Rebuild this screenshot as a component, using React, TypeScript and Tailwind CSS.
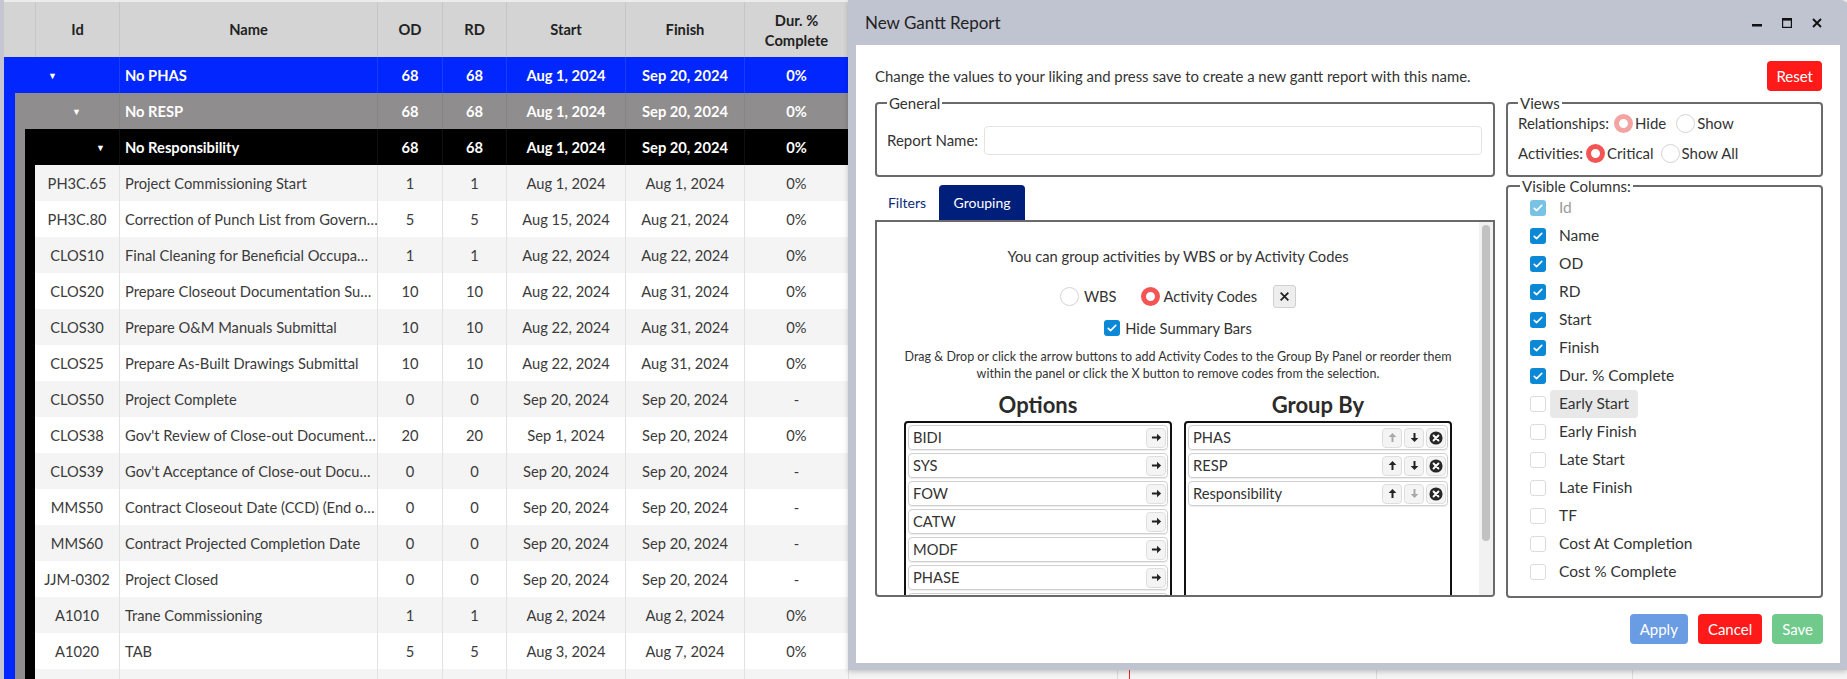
import React from 'react';
import clsx from 'clsx';

type Row = { id: string; name: string; od: string; rd: string; start: string; finish: string; dur: string };

const ROWS: Row[] = [
  { id: 'PH3C.65', name: 'Project Commissioning Start', od: '1', rd: '1', start: 'Aug 1, 2024', finish: 'Aug 1, 2024', dur: '0%' },
  { id: 'PH3C.80', name: 'Correction of Punch List from Govern…', od: '5', rd: '5', start: 'Aug 15, 2024', finish: 'Aug 21, 2024', dur: '0%' },
  { id: 'CLOS10', name: 'Final Cleaning for Beneficial Occupa…', od: '1', rd: '1', start: 'Aug 22, 2024', finish: 'Aug 22, 2024', dur: '0%' },
  { id: 'CLOS20', name: 'Prepare Closeout Documentation Su…', od: '10', rd: '10', start: 'Aug 22, 2024', finish: 'Aug 31, 2024', dur: '0%' },
  { id: 'CLOS30', name: 'Prepare O&M Manuals Submittal', od: '10', rd: '10', start: 'Aug 22, 2024', finish: 'Aug 31, 2024', dur: '0%' },
  { id: 'CLOS25', name: 'Prepare As-Built Drawings Submittal', od: '10', rd: '10', start: 'Aug 22, 2024', finish: 'Aug 31, 2024', dur: '0%' },
  { id: 'CLOS50', name: 'Project Complete', od: '0', rd: '0', start: 'Sep 20, 2024', finish: 'Sep 20, 2024', dur: '-' },
  { id: 'CLOS38', name: "Gov't Review of Close-out Document…", od: '20', rd: '20', start: 'Sep 1, 2024', finish: 'Sep 20, 2024', dur: '0%' },
  { id: 'CLOS39', name: "Gov't Acceptance of Close-out Docu…", od: '0', rd: '0', start: 'Sep 20, 2024', finish: 'Sep 20, 2024', dur: '-' },
  { id: 'MMS50', name: 'Contract Closeout Date (CCD) (End o…', od: '0', rd: '0', start: 'Sep 20, 2024', finish: 'Sep 20, 2024', dur: '-' },
  { id: 'MMS60', name: 'Contract Projected Completion Date', od: '0', rd: '0', start: 'Sep 20, 2024', finish: 'Sep 20, 2024', dur: '-' },
  { id: 'JJM-0302', name: 'Project Closed', od: '0', rd: '0', start: 'Sep 20, 2024', finish: 'Sep 20, 2024', dur: '-' },
  { id: 'A1010', name: 'Trane Commissioning', od: '1', rd: '1', start: 'Aug 2, 2024', finish: 'Aug 2, 2024', dur: '0%' },
  { id: 'A1020', name: 'TAB', od: '5', rd: '5', start: 'Aug 3, 2024', finish: 'Aug 7, 2024', dur: '0%' },
  { id: '', name: '', od: '', rd: '', start: '', finish: '', dur: '' },
];

// last option sits below the scroll fold, only its top edge shows
const OPTIONS = ['BIDI', 'SYS', 'FOW', 'CATW', 'MODF', 'PHASE', ''];
const GROUP_BY = ['PHAS', 'RESP', 'Responsibility'];
const COLUMNS = [
  { label: 'Id', checked: true, disabled: true },
  { label: 'Name', checked: true },
  { label: 'OD', checked: true },
  { label: 'RD', checked: true },
  { label: 'Start', checked: true },
  { label: 'Finish', checked: true },
  { label: 'Dur. % Complete', checked: true },
  { label: 'Early Start', hover: true },
  { label: 'Early Finish' },
  { label: 'Late Start' },
  { label: 'Late Finish' },
  { label: 'TF' },
  { label: 'Cost At Completion' },
  { label: 'Cost % Complete' },
];

const Caret = () => <span className="text-[9px] leading-none">▼</span>;

const GroupRow = ({ lead, pad, label, divider }: { lead: string; pad: string; label: string; divider: string }) => (
  <div className="flex h-[36px] items-center text-white font-bold text-[14.7px]">
    <div className={clsx('h-full flex items-center', lead, pad)}>
      <Caret />
    </div>
    <div className={clsx('w-[258px] h-full flex items-center pl-[5px] border-l', divider)}>{label}</div>
    <div className={clsx('w-[65px] h-full flex items-center justify-center border-l', divider)}>68</div>
    <div className={clsx('w-[64px] h-full flex items-center justify-center border-l', divider)}>68</div>
    <div className={clsx('w-[119px] h-full flex items-center justify-center border-l', divider)}>Aug 1, 2024</div>
    <div className={clsx('w-[119px] h-full flex items-center justify-center border-l', divider)}>Sep 20, 2024</div>
    <div className={clsx('flex-1 h-full flex items-center justify-center border-l', divider)}>0%</div>
  </div>
);

const DataRow = ({ row, i }: { row: Row; i: number }) => (
  <div className={clsx('flex h-[36px] items-center text-[14.7px] text-[#3b3b3b]', i % 2 === 0 ? 'bg-[#f4f4f4]' : 'bg-white')}>
    <div className="w-[84px] h-full flex items-center justify-center">{row.id}</div>
    <div className="w-[258px] h-full flex items-center pl-[5px] border-l border-[#e2e2e2] whitespace-nowrap overflow-hidden">{row.name}</div>
    <div className="w-[65px] h-full flex items-center justify-center border-l border-[#e2e2e2]">{row.od}</div>
    <div className="w-[64px] h-full flex items-center justify-center border-l border-[#e2e2e2]">{row.rd}</div>
    <div className="w-[119px] h-full flex items-center justify-center border-l border-[#e2e2e2]">{row.start}</div>
    <div className="w-[119px] h-full flex items-center justify-center border-l border-[#e2e2e2]">{row.finish}</div>
    <div className="flex-1 h-full flex items-center justify-center border-l border-[#e2e2e2]">{row.dur}</div>
  </div>
);

const ActivityTable = () => (
  <div className="w-[844px] flex flex-col shrink-0">
    <div className="flex h-[57px] bg-[#d4d4d4] border-t-2 border-[#ececec] text-[14.7px] font-bold text-[#222]">
      <div className="w-[31px]" />
      <div className="w-[84px] flex items-center justify-center border-l border-[#c6c6c6]">Id</div>
      <div className="w-[258px] flex items-center justify-center border-l border-[#c6c6c6]">Name</div>
      <div className="w-[65px] flex items-center justify-center border-l border-[#c6c6c6]">OD</div>
      <div className="w-[64px] flex items-center justify-center border-l border-[#c6c6c6]">RD</div>
      <div className="w-[119px] flex items-center justify-center border-l border-[#c6c6c6]">Start</div>
      <div className="w-[119px] flex items-center justify-center border-l border-[#c6c6c6]">Finish</div>
      <div className="flex-1 flex flex-col items-center justify-center border-l border-[#c6c6c6] leading-[20px]">
        <span>Dur. %</span>
        <span>Complete</span>
      </div>
    </div>
    <div className="flex flex-col bg-[#0226fe]">
      <GroupRow lead="w-[115px]" pad="pl-[44px]" label="No PHAS" divider="border-[#1a3cff]" />
      <div className="pl-[11px]">
        <div className="flex flex-col bg-[#8f8d8e]">
          <GroupRow lead="w-[104px]" pad="pl-[57px]" label="No RESP" divider="border-[#858384]" />
          <div className="pl-[10px]">
            <div className="flex flex-col bg-black">
              <GroupRow lead="w-[94px]" pad="pl-[71px]" label="No Responsibility" divider="border-[#111]" />
              <div className="pl-[10px] flex flex-col">
                {ROWS.map((r, i) => (
                  <DataRow key={i} row={r} i={i} />
                ))}
              </div>
            </div>
          </div>
        </div>
      </div>
    </div>
  </div>
);

const GanttPane = () => (
  <div className="relative flex-1 flex flex-col border-l border-[#ddd]">
    <div className="h-[57px] bg-[#d4d4d4] border-t-2 border-[#ececec]" />
    <div className="h-[108px] bg-white" />
    {ROWS.map((_, i) => (
      <div key={i} className={clsx('h-[36px]', i % 2 === 0 ? 'bg-[#f4f4f4]' : 'bg-white')} />
    ))}
    {/* chart grid */}
    <div className="absolute top-0 bottom-0 left-[268px] w-px bg-[#dcdcdc]" />
    <div className="absolute top-0 bottom-0 left-[527px] w-px bg-[#dcdcdc]" />
    <div className="absolute top-0 bottom-0 left-[783px] w-px bg-[#dcdcdc]" />
    <div className="absolute top-0 bottom-0 left-[280px] w-px bg-[#ff2020]" />
  </div>
);

const Arrow = ({ dir, faded }: { dir: 'right' | 'up' | 'down'; faded?: boolean }) => (
  <svg
    viewBox="0 0 12 12"
    className={clsx('w-[11px] h-[11px]', dir === 'up' && '-rotate-90', dir === 'down' && 'rotate-90')}
  >
    <path d="M1 4.9h5.6V1.8L11 6l-4.4 4.2V7.1H1z" fill={faded ? '#a9a9a9' : '#222'} />
  </svg>
);

const CircleX = () => (
  <svg viewBox="0 0 16 16" className="w-[14px] h-[14px]">
    <circle cx="8" cy="8" r="7.5" fill="#262626" />
    <path d="M5.2 5.2l5.6 5.6M10.8 5.2l-5.6 5.6" stroke="white" strokeWidth="2.2" strokeLinecap="round" />
  </svg>
);

const Check = ({ checked, disabled }: { checked?: boolean; disabled?: boolean }) => (
  <span
    className={clsx(
      'w-[16px] h-[16px] rounded-[3px] flex items-center justify-center shrink-0',
      checked ? (disabled ? 'bg-[#78c2e6]' : 'bg-[#0b88d6]') : 'bg-white border border-[#dcdcdc]'
    )}
  >
    {checked && (
      <svg viewBox="0 0 16 16" className="w-[12px] h-[12px]">
        <path d="M3 8.4l3.1 3L13 4.6" stroke="white" strokeWidth="2.2" fill="none" strokeLinecap="round" strokeLinejoin="round" />
      </svg>
    )}
  </span>
);

const Radio = ({ on, pale }: { on?: boolean; pale?: boolean }) =>
  on ? (
    <span
      className={clsx(
        'block w-[19px] h-[19px] rounded-full border-[5px] bg-white shrink-0',
        pale ? 'border-[#f4a3a3]' : 'border-[#f35555]'
      )}
    />
  ) : (
    <span className="block w-[19px] h-[19px] rounded-full border border-[#d4d4d4] bg-white shrink-0" />
  );

const SmallBtn = ({ children }: { children: React.ReactNode }) => (
  <span className="w-[20px] h-[20px] rounded-[4px] bg-[#f4f4f4] border border-[#dedede] flex items-center justify-center">
    {children}
  </span>
);

const GroupingPanel = () => (
  <div className="h-[377px] border-2 border-[#6a6a6a] rounded-b-[4px] flex overflow-hidden">
    <div className="flex-1 flex flex-col items-center text-[#333] pt-[24px]">
      <p className="text-[14.7px] leading-[20px]">You can group activities by WBS or by Activity Codes</p>
      <div className="mt-[19px] h-[22px] flex items-center text-[14.7px]">
        <Radio />
        <span className="ml-[5px]">WBS</span>
        <span className="ml-[24px]"><Radio on /></span>
        <span className="ml-[4px]">Activity Codes</span>
        <span className="ml-[16px] w-[23px] h-[23px] rounded-[3px] bg-[#eeeeee] border border-[#d0d0d0] flex items-center justify-center">
          <svg viewBox="0 0 10 10" className="w-[11px] h-[11px]">
            <path d="M1.5 1.5l7 7M8.5 1.5l-7 7" stroke="#222" strokeWidth="1.6" />
          </svg>
        </span>
      </div>
      <div className="mt-[11px] h-[20px] flex items-center gap-[5px] text-[14.7px]">
        <Check checked />
        <span>Hide Summary Bars</span>
      </div>
      <p className="mt-[10px] text-[12.5px] leading-[17px] text-center px-[16px]">
        Drag &amp; Drop or click the arrow buttons to add Activity Codes to the Group By Panel or reorder them
        <br />
        within the panel or click the X button to remove codes from the selection.
      </p>
      <div className="mt-[10px] flex gap-[12px]">
        <div className="w-[268px] flex flex-col">
          <h3 className="text-[22px] leading-[26px] font-bold text-center text-[#2b2b2b]">Options</h3>
          <div className="mt-[3px] h-[230px] border-2 border-[#111] rounded-[4px] p-[2px] flex flex-col gap-[3px]">
            {OPTIONS.map((o, i) => (
              <div key={i} className="h-[25px] shrink-0 rounded-[4px] border border-[#cfcfcf] shadow-[0_1px_1px_rgba(0,0,0,0.08)] flex items-center pl-[4px] pr-[1px] text-[14.7px]">
                <span>{o}</span>
                <span className="ml-auto">
                  <SmallBtn>
                    <Arrow dir="right" />
                  </SmallBtn>
                </span>
              </div>
            ))}
          </div>
        </div>
        <div className="w-[268px] flex flex-col">
          <h3 className="text-[22px] leading-[26px] font-bold text-center text-[#2b2b2b]">Group By</h3>
          <div className="mt-[3px] h-[230px] border-2 border-[#111] rounded-[4px] p-[2px] flex flex-col gap-[3px]">
            {GROUP_BY.map((g, i) => (
              <div key={g} className="h-[25px] shrink-0 rounded-[4px] border border-[#cfcfcf] shadow-[0_1px_1px_rgba(0,0,0,0.08)] flex items-center pl-[4px] pr-[1px] text-[14.7px]">
                <span>{g}</span>
                <span className="ml-auto flex gap-[2px]">
                  <SmallBtn>
                    <Arrow dir="up" faded={i === 0} />
                  </SmallBtn>
                  <SmallBtn>
                    <Arrow dir="down" faded={i === GROUP_BY.length - 1} />
                  </SmallBtn>
                  <SmallBtn>
                    <CircleX />
                  </SmallBtn>
                </span>
              </div>
            ))}
          </div>
        </div>
      </div>
    </div>
    <div className="w-[14px] bg-[#f1f1f1] pt-[3px] flex justify-center">
      <div className="w-[8px] h-[316px] rounded-full bg-[#c1c1c1]" />
    </div>
  </div>
);

const Dialog = () => (
  <div className="absolute left-[848px] top-0 w-[999px] h-[670px] bg-[#c0c3d0] rounded-tr-[6px] pl-[8px] pr-[7px] pb-[7px] flex flex-col shadow-[0_2px_5px_rgba(0,0,0,0.2)]">
    <div className="h-[45px] shrink-0 flex items-center pl-[9px] pr-[18px]">
      <span className="text-[17px] text-[#222]">New Gantt Report</span>
      <div className="ml-auto flex items-center gap-[20px]">
        <svg viewBox="0 0 10 10" className="w-[10px] h-[10px]">
          <rect x="0" y="6" width="10" height="2.5" fill="#111" />
        </svg>
        <svg viewBox="0 0 10 10" className="w-[10px] h-[10px]">
          <rect x="0.6" y="0.6" width="8.8" height="8.8" fill="none" stroke="#111" strokeWidth="1.2" />
          <rect x="0" y="0" width="10" height="2.6" fill="#111" />
        </svg>
        <svg viewBox="0 0 10 10" className="w-[10px] h-[10px]">
          <path d="M1 1l8 8M9 1l-8 8" stroke="#111" strokeWidth="1.9" />
        </svg>
      </div>
    </div>
    <div className="flex-1 bg-white pl-[19px] pr-[17px] pt-[16px] flex flex-col text-[#333]">
      <div className="flex items-center h-[30px]">
        <p className="text-[14.9px]">Change the values to your liking and press save to create a new gantt report with this name.</p>
        <button className="ml-auto mr-[1px] h-[30px] px-[9px] rounded-[4px] bg-[#ff1a1a] text-white text-[15px]">Reset</button>
      </div>
      <div className="mt-[3px] grid grid-cols-[620px_317px] gap-x-[11px]">
        <fieldset className="h-[83px] border-2 border-[#6a6a6a] rounded-[4px]">
          <legend className="ml-[10px] px-[2px] text-[15px] leading-[18px]">General</legend>
          <div className="flex items-center h-[56px] pl-[10px] pr-[11px]">
            <span className="text-[15px]">Report Name:</span>
            <input className="ml-[6px] flex-1 h-[29px] rounded-[4px] border border-[#e3e3e3] outline-none" />
          </div>
        </fieldset>
        <fieldset className="h-[83px] border-2 border-[#6a6a6a] rounded-[4px]">
          <legend className="ml-[10px] px-[2px] text-[15px] leading-[18px]">Views</legend>
          <div className="pl-[10px] flex flex-col text-[15px] -mt-[4px]">
            <div className="h-[30px] flex items-center">
              <span>Relationships:</span>
              <span className="ml-[5px]"><Radio on pale /></span>
              <span className="ml-[2px]">Hide</span>
              <span className="ml-[10px]"><Radio /></span>
              <span className="ml-[2px]">Show</span>
            </div>
            <div className="h-[30px] flex items-center">
              <span>Activities:</span>
              <span className="ml-[3px]"><Radio on /></span>
              <span className="ml-[2px]">Critical</span>
              <span className="ml-[7px]"><Radio /></span>
              <span className="ml-[2px]">Show All</span>
            </div>
          </div>
        </fieldset>
        <div className="mt-[8px] flex flex-col">
          <div className="flex h-[35px] items-stretch text-[14px]">
            <span className="w-[64px] flex items-center justify-center text-[#0e2a7a]">Filters</span>
            <span className="w-[86px] flex items-center justify-center rounded-t-[4px] bg-[#001f7b] text-white">Grouping</span>
          </div>
          <GroupingPanel />
        </div>
        <fieldset className="h-[421px] border-2 border-[#6a6a6a] rounded-[4px]">
          <legend className="ml-[12px] px-[2px] text-[15px] leading-[18px]">Visible Columns:</legend>
          <div className="flex flex-col pl-[22px] -mt-[1px]">
            {COLUMNS.map((c) => (
              <div key={c.label} className="h-[28px] flex items-center">
                <Check checked={c.checked} disabled={c.disabled} />
                <span
                  className={clsx(
                    'ml-[4px] h-[28px] px-[9px] flex items-center rounded-[4px] text-[15.5px]',
                    c.disabled ? 'text-[#9a9a9a]' : 'text-[#333]',
                    c.hover && 'bg-[#e8e8e8]'
                  )}
                >
                  {c.label}
                </span>
              </div>
            ))}
          </div>
        </fieldset>
      </div>
      <div className="mt-[16px] flex justify-end gap-[10px] text-[15px] text-white">
        <button className="h-[30px] px-[10px] rounded-[4px] bg-[#6a9ce3]">Apply</button>
        <button className="h-[30px] px-[10px] rounded-[4px] bg-[#ff1a1a]">Cancel</button>
        <button className="h-[30px] px-[10px] rounded-[4px] bg-[#6fca8b]">Save</button>
      </div>
    </div>
  </div>
);

export default function App() {
  return (
    <div className="relative w-[1847px] h-[679px] overflow-hidden bg-white font-['Lato',sans-serif]">
      <div className="flex">
        <div className="w-[4px] shrink-0 bg-[#c4c6d2]" />
        <ActivityTable />
        <GanttPane />
      </div>
      <Dialog />
    </div>
  );
}
